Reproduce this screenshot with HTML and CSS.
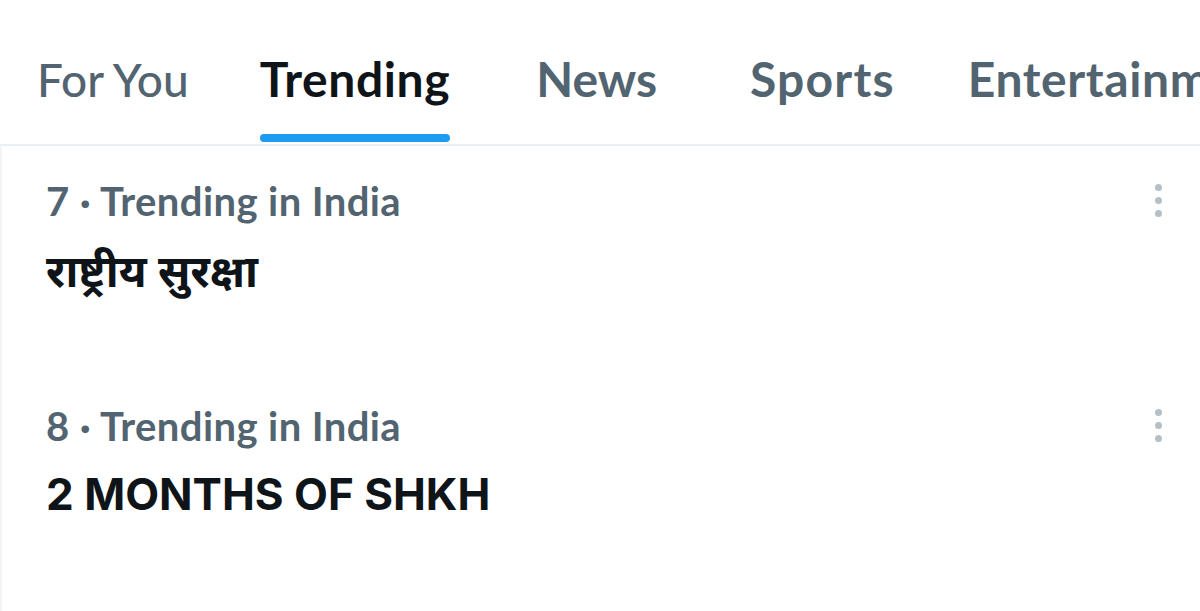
FILE: index.html
```html
<!DOCTYPE html>
<html>
<head>
<meta charset="utf-8">
<link rel="stylesheet" href="styles.css">
</head>
<body>
<div class="page">
  <nav class="tabs">
    <div class="tab tab-foryou">For You</div>
    <div class="tab tab-trending active">Trending<span class="bar"></span></div>
    <div class="tab tab-news">News</div>
    <div class="tab tab-sports">Sports</div>
    <div class="tab tab-ent">Entertainment</div>
  </nav>
  <main class="list">
    <section class="trend trend-1">
      <div class="trend-text">
        <div class="meta">7 · Trending in India</div>
        <div class="title hindi">राष्ट्रीय सुरक्षा</div>
      </div>
      <div class="more"><span></span><span></span><span></span></div>
    </section>
    <section class="trend trend-2">
      <div class="trend-text">
        <div class="meta">8 · Trending in India</div>
        <div class="title">2 MONTHS OF SHKH</div>
      </div>
      <div class="more"><span></span><span></span><span></span></div>
    </section>
  </main>
</div>
</body>
</html>
```

FILE: styles.css
```css
html, body {
  margin: 0;
  padding: 0;
  background: #ffffff;
}
body {
  width: 1200px;
  height: 611px;
  overflow: hidden;
  font-family: Lato, "Noto Sans", sans-serif;
}
.page {
  display: flex;
  flex-direction: column;
  height: 611px;
}
.tabs {
  display: flex;
  align-items: stretch;
  height: 144px;
  border-bottom: 2px solid #eceff1;
  white-space: nowrap;
  overflow: hidden;
  flex: none;
}
.tab {
  position: relative;
  font-size: 48px;
  letter-spacing: 0.6px;
  font-weight: 700;
  color: #536471;
  padding-top: 53px;
  line-height: 52px;
}
.tab-foryou { margin-left: 37px; font-size: 46px; font-weight: 500; letter-spacing: 0; padding-top: 54px; }
.tab-trending { margin-left: 71px; color: #0f1419; }
.tab-news { margin-left: 86px; letter-spacing: 0; }
.tab-sports { margin-left: 93px; letter-spacing: 1.2px; }
.tab-ent { margin-left: 73px; }
.tab .bar {
  position: absolute;
  left: 0;
  right: 0;
  bottom: 2px;
  height: 8px;
  border-radius: 4px;
  background: #1d9bf0;
}
.list {
  border-left: 2px solid #f2f4f5;
  display: flex;
  flex-direction: column;
  flex: 1;
}
.trend {
  display: flex;
  justify-content: space-between;
  padding-left: 44px;
  padding-right: 38px;
}
.trend-1 { padding-top: 31px; height: 191px; }
.trend-2 { padding-top: 34px; }
.meta {
  font-size: 40px;
  letter-spacing: 0.4px;
  font-weight: 700;
  color: #536471;
  line-height: 48px;
}
.title {
  font-family: Inter, Roboto, "Noto Sans", sans-serif;
  font-size: 44px;
  font-weight: 700;
  color: #0f1419;
  line-height: 52px;
  margin-top: 18px;
}
.title.hindi {
  font-family: "Noto Sans Devanagari", "Noto Sans", sans-serif;
  font-size: 44px;
  margin-top: 26px;
}
.more {
  display: flex;
  flex-direction: column;
  gap: 6px;
  padding-top: 7px;
}
.more span {
  width: 7px;
  height: 7px;
  border-radius: 50%;
  background: #b3c0c8;
}
```
